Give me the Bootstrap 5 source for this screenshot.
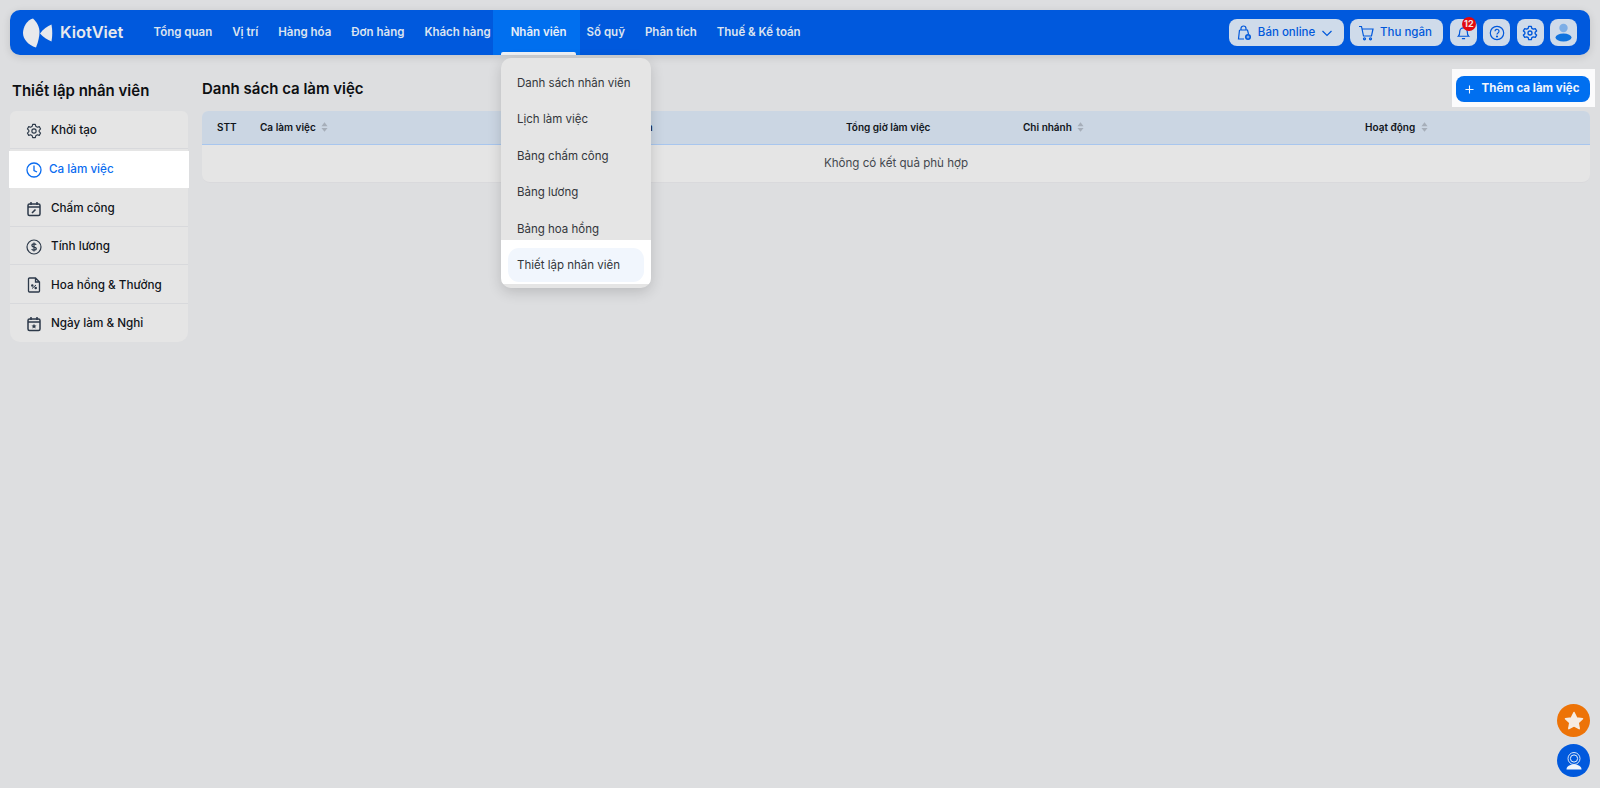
<!DOCTYPE html>
<html lang="vi">
<head>
<meta charset="utf-8">
<title>Ca làm việc</title>
<link href="https://cdn.jsdelivr.net/npm/bootstrap@5.3.0/dist/css/bootstrap.min.css" rel="stylesheet">
<style>
html,body{height:100%}
body{background:#dddee0;font-family:Inter,"Liberation Sans",sans-serif;color:#0d0f12;padding:10px 10px 0;overflow:hidden}
.topbar{height:45px;background:#0059dd;border-radius:10px;box-shadow:0 2px 8px rgba(0,0,0,.12);padding:0 13px 0 13px}
.brand{width:120.5px;color:#e8e9ec;font-size:16.4px;font-weight:600;gap:7px}
.menu-link{display:flex;align-items:center;height:45px;padding:1px 10px 0;font-size:11.5px;font-weight:600;color:#dce4f0;text-decoration:none;white-space:nowrap;position:relative}
.menu-link.on{background:#006fef;color:#e8eef7;padding:1px 13.5px 0 18px;margin:0 -3.500px 0 -8px}
.menu-link.on::after{content:"";position:absolute;left:8px;right:4px;bottom:0;height:3px;background:#eef1f5;border-radius:2px 2px 0 0}
.top-tools{gap:6.4px}
.topbtn{height:27px;background:#cfdbea;border:0;border-radius:8px;color:#0058db;font-size:11.5px;font-weight:500;display:flex;align-items:center;justify-content:center;padding:0;gap:6px}
.sq{width:27px;position:relative}
.w-sale{width:115px;padding-right:4px}.w-cash{width:93px;padding-right:4px}
.count{position:absolute;left:12px;top:-2px;width:14px;height:14px;border-radius:50%;background:#e2080f;color:#f3e4e4;font-size:9px;font-weight:700;line-height:14px;text-align:center}
.body-row{gap:14px;margin-top:0}
.side{width:178px;flex:none}
.head-txt{font-size:15px;font-weight:600;line-height:20px;margin:0}
.side .head-txt{padding:26px 0 10px 2px}
.side-list{background:#e5e5e5;margin:0;padding:0;list-style:none;border-radius:6px 6px 10px 10px}
.side-list li{height:38.4px;display:flex;align-items:center;gap:9px;padding:3px 16px 0 16px;font-size:11.7px;font-weight:500;color:#10141a;border-bottom:1px solid #d8d9dc}
.side-list li:last-child{border-bottom:0}
.side-list li.on{background:#fff;color:#0a6cf0;gap:7px;margin:2px -0.5px 0 -1px;height:37px;padding:0 16px 0 17px;border-bottom:0}
.side-list svg{flex:none}
.main-col{min-width:0;flex:1}
.main-head{height:57px;padding-top:14px}
.main-head .head-txt{padding-top:10px}
.add-wrap{background:#fbfbfc;padding:7px 5px 5px 4px;margin:0 -5px 0 0}
.add-btn{width:134px;height:26px;background:#006ff0;border:0;border-radius:8px;color:#f2f6fc;font-size:11.5px;font-weight:700;display:flex;align-items:center;justify-content:center;gap:8px;padding:0 2px 0 0}
.grid-box{background:#e5e5e5;border-radius:6px 6px 8px 8px;overflow:hidden;border-bottom:1px solid #d9d9dc;margin:-1px 0 0}
.grid-tbl{width:100%;table-layout:fixed;margin:0;border-collapse:collapse}
.grid-tbl th{height:33px;background:#cbd6e3;border-bottom:1px solid #a8c6ee;font-size:10px;font-weight:600;padding:0;white-space:nowrap;vertical-align:middle;color:#10141a}
.grid-tbl td{height:38px;text-align:center;font-size:11.6px;color:#44484e;padding:1px 0 0;vertical-align:middle}
.c1{width:58px;padding-left:15px!important}.c2{width:348px}.c3{width:238px}.c4{width:177px}.c5{width:342px}
.c3{text-align:left}
.sortmark{display:inline-block;vertical-align:-1px;margin-left:3px}
.drop{position:absolute;left:501px;top:58px;width:150px;height:230px;background:#e5e5e5;border-radius:10px;box-shadow:0 4px 14px rgba(0,0,0,.16);padding:7px 0 0;z-index:5;margin:0;list-style:none;overflow:hidden}
.drop li{height:36.6px;display:flex;align-items:center;padding-left:16px;font-size:11.5px;color:#33363b;font-weight:400}
.drop .lit-zone{position:absolute;left:0;right:0;top:182px;height:44px;background:#fff;padding:8px 7px 0;align-items:flex-start}
.drop .lit-item{height:34px;background:#f1f6fd;border-radius:11px;padding:2px 0 0 9px;display:flex;align-items:center}
.fab{position:fixed;right:10px;width:33px;height:33px;border-radius:50%;display:flex;align-items:center;justify-content:center;z-index:6}
.fab-a{bottom:51px;background:#ed7307}
.fab-b{bottom:11px;background:#0059dd}
</style>
</head>
<body>
<nav class="topbar d-flex align-items-center">
  <div class="brand d-flex align-items-center">
    <svg width="30" height="30" viewBox="0 0 30 30"><path d="M10 .5C4 2 0 9 0 15S5 27 13 29.500C15.500 23 16.500 18 16.500 14C16.500 9 14 4 10 .5Z" fill="#e8e9ec"/><path d="M28.500 6.500C24.500 8 20 11.500 17 15.500C20 19 24.500 22 28.500 23.500C29.500 18 29.500 12 28.500 6.500Z" fill="#e8e9ec"/></svg>
    <span>KiotViet</span>
  </div>
  <a class="menu-link" href="#">Tổng quan</a>
  <a class="menu-link" href="#">Vị trí</a>
  <a class="menu-link" href="#">Hàng hóa</a>
  <a class="menu-link" href="#">Đơn hàng</a>
  <a class="menu-link" href="#">Khách hàng</a>
  <a class="menu-link on" href="#">Nhân viên</a>
  <a class="menu-link" href="#">Số quỹ</a>
  <a class="menu-link" href="#">Phân tích</a>
  <a class="menu-link" href="#">Thuế &amp; Kế toán</a>
  <div class="top-tools ms-auto d-flex align-items-center">
    <button class="topbtn w-sale" type="button">
      <svg width="16" height="16" viewBox="0 0 16 16" fill="none" stroke="#0058db" stroke-width="1.200"><path d="M5 5V3.500a2.500 2.500 0 0 1 5 0V5M3.500 5h8l1 4M8 14H2.500L3.500 5"/><circle cx="12" cy="12" r="3" fill="#0058db" stroke="none"/><path d="M10.500 12h3M12 10.500v3" stroke="#cfdbea" stroke-width=".8"/></svg>
      Bán online
      <svg width="12" height="12" viewBox="0 0 12 12" fill="none" stroke="#0058db" stroke-width="1.200"><path d="M1.500 4l4.500 4.500L10.500 4"/></svg>
    </button>
    <button class="topbtn w-cash" type="button">
      <svg width="16" height="16" viewBox="0 0 16 16" fill="none" stroke="#0058db" stroke-width="1.200"><path d="M1 1.500h2.500L5.500 11h8l1.500-7H4"/><circle cx="6.500" cy="13.800" r="1"/><circle cx="12.500" cy="13.800" r="1"/></svg>
      Thu ngân
    </button>
    <button class="topbtn sq" type="button" aria-label="Thông báo">
      <svg width="15" height="15" viewBox="0 0 16 16" fill="none" stroke="#0058db" stroke-width="1.300"><path d="M2.500 12h11c-1.500-1.500-1.500-3-1.500-5a4 4 0 0 0-8 0c0 2 0 3.500-1.500 5ZM6.300 14.500h3.400"/></svg>
      <span class="count">12</span>
    </button>
    <button class="topbtn sq" type="button" aria-label="Trợ giúp">
      <svg width="16" height="16" viewBox="0 0 16 16" fill="none" stroke="#0058db" stroke-width="1.200"><circle cx="8" cy="8" r="6.700"/><path d="M6 6.300a2 2 0 1 1 3 1.700c-.7.400-1 .8-1 1.500"/><circle cx="8" cy="11.500" r=".5" fill="#0058db"/></svg>
    </button>
    <button class="topbtn sq" type="button" aria-label="Cài đặt">
      <svg width="16" height="16" viewBox="0 0 24 24" fill="none" stroke="#0058db" stroke-width="2"><circle cx="12" cy="12" r="3"/><path d="M10 2h4l.7 3 2.300 1.300 2.900-.9 2 3.500-2.200 2.100v2l2.200 2.100-2 3.500-2.900-.9L14.700 19 14 22h-4l-.7-3L7 17.700l-2.900.9-2-3.500L4.300 13v-2L2.100 8.900l2-3.500 2.900.9L9.300 5Z" stroke-linejoin="round"/></svg>
    </button>
    <button class="topbtn sq" type="button" aria-label="Tài khoản">
      <svg width="17" height="19" viewBox="0 0 17 19"><circle cx="8.500" cy="5" r="4.200" fill="#7daee6"/><ellipse cx="8.500" cy="14.500" rx="8" ry="4" fill="#0f73df"/></svg>
    </button>
  </div>
</nav>

<div class="body-row d-flex">
  <aside class="side">
    <h2 class="head-txt">Thiết lập nhân viên</h2>
    <ul class="side-list">
      <li><svg width="16" height="16" viewBox="0 0 24 24" fill="none" stroke="#2c3949" stroke-width="1.700"><circle cx="12" cy="12" r="3.200"/><path d="M10 2h4l.7 3 2.300 1.300 2.900-.9 2 3.500-2.200 2.100v2l2.200 2.100-2 3.500-2.900-.9L14.700 19 14 22h-4l-.7-3L7 17.700l-2.900.9-2-3.500L4.300 13v-2L2.100 8.900l2-3.500 2.900.9L9.300 5Z" stroke-linejoin="round"/></svg>Khởi tạo</li>
      <li class="on"><svg width="16" height="16" viewBox="0 0 16 16" fill="none" stroke="#0a6cf0" stroke-width="1.300"><circle cx="8" cy="8" r="7"/><path d="M8 3.500V8.500L11 10"/></svg>Ca làm việc</li>
      <li><svg width="16" height="16" viewBox="0 0 16 16" fill="none" stroke="#2c3949" stroke-width="1.500"><rect x="2" y="3" width="12" height="11.500" rx="1.500"/><path d="M2 6h12M5 1v3M11 1v3"/><path d="M6 12l3.500-3.500" stroke-width="1.600"/></svg>Chấm công</li>
      <li><svg width="16" height="16" viewBox="0 0 16 16" fill="none" stroke="#2c3949" stroke-width="1.200"><circle cx="8" cy="8" r="7"/><path d="M10.200 5.800C9.700 5 9 4.800 8 4.800c-1.200 0-2.100.6-2.100 1.600 0 2.300 4.400 1 4.400 3.200 0 1-1 1.600-2.300 1.600-1.100 0-1.900-.4-2.300-1.200M8 3.500v9"/></svg>Tính lương</li>
      <li><svg width="16" height="16" viewBox="0 0 16 16" fill="none" stroke="#2c3949" stroke-width="1.300"><path d="M9.500 1H3.500a1 1 0 0 0-1 1v12a1 1 0 0 0 1 1h9a1 1 0 0 0 1-1V5ZM9.500 1v4h4"/><path d="M6 11.500l4-3.500" stroke-width="1"/><circle cx="6.300" cy="8.500" r=".6" fill="#2c3949"/><circle cx="9.700" cy="11" r=".6" fill="#2c3949"/></svg>Hoa hồng &amp; Thưởng</li>
      <li><svg width="16" height="16" viewBox="0 0 16 16" fill="none" stroke="#2c3949" stroke-width="1.500"><rect x="2" y="3" width="12" height="11.500" rx="1.500"/><path d="M2 6h12M5 1v3M11 1v3"/><path d="M8 7.800l.8 1.600 1.700.2-1.300 1.100.4 1.700L8 11.500l-1.600.9.400-1.700-1.300-1.100 1.700-.2Z" fill="#2c3949" stroke="none"/></svg>Ngày làm &amp; Nghỉ</li>
    </ul>
  </aside>

  <main class="main-col">
    <div class="main-head d-flex justify-content-between align-items-start">
      <h1 class="head-txt">Danh sách ca làm việc</h1>
      <div class="add-wrap">
        <button class="add-btn" type="button">
          <svg width="9" height="9" viewBox="0 0 10 10" stroke="#f2f6fc" stroke-width="1.200"><path d="M5 .5v9M.5 5h9"/></svg>
          Thêm ca làm việc
        </button>
      </div>
    </div>
    <div class="grid-box">
      <table class="grid-tbl">
        <thead>
          <tr>
            <th class="c1">STT</th>
            <th class="c2">Ca làm việc <svg class="sortmark" width="7" height="10" viewBox="0 0 8 11" fill="#a6aeb9"><path d="M4 0l3.500 4.500h-7ZM4 11L.5 6.500h7Z"/></svg></th>
            <th class="c3">Thời gian</th>
            <th class="c4">Tổng giờ làm việc</th>
            <th class="c5">Chi nhánh <svg class="sortmark" width="7" height="10" viewBox="0 0 8 11" fill="#a6aeb9"><path d="M4 0l3.500 4.500h-7ZM4 11L.5 6.500h7Z"/></svg></th>
            <th>Hoạt động <svg class="sortmark" width="7" height="10" viewBox="0 0 8 11" fill="#a6aeb9"><path d="M4 0l3.500 4.500h-7ZM4 11L.5 6.500h7Z"/></svg></th>
          </tr>
        </thead>
        <tbody><tr><td colspan="6">Không có kết quả phù hợp</td></tr></tbody>
      </table>
    </div>
  </main>
</div>

<ul class="drop">
  <li>Danh sách nhân viên</li>
  <li>Lịch làm việc</li>
  <li>Bảng chấm công</li>
  <li>Bảng lương</li>
  <li>Bảng hoa hồng</li>
  <li class="lit-zone"><span class="lit-item w-100">Thiết lập nhân viên</span></li>
</ul>

<div class="fab fab-a"><svg width="20" height="20" viewBox="0 0 20 20"><path d="M10 1.500l2.600 5.400 5.900.8-4.300 4.100 1 5.900L10 14.900l-5.200 2.800 1-5.900L1.500 7.700l5.900-.8Z" fill="#f6ece2" stroke="#f6ece2" stroke-width="1.500" stroke-linejoin="round"/></svg></div>
<div class="fab fab-b"><svg width="22" height="22" viewBox="0 0 22 22" fill="none"><circle cx="11" cy="8.500" r="6" stroke="#dbe6f8" stroke-width="1"/><circle cx="11" cy="8.500" r="3.600" fill="#0059dd" stroke="#eef3fb" stroke-width="1"/><path d="M3.500 19.500c0-3.500 3.500-5 7.500-5s7.500 1.500 7.500 5Z" fill="#eef3fb"/></svg></div>
</body>
</html>
